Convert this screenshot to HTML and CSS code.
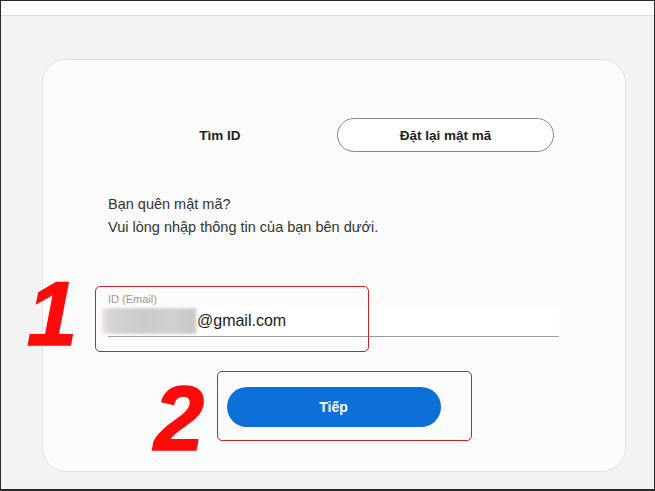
FILE: index.html
```html
<!DOCTYPE html>
<html lang="vi">
<head>
<meta charset="utf-8">
<title>Đặt lại mật mã</title>
<link rel="stylesheet" href="styles.css">
</head>
<body>
<div class="frame">
  <div class="topbar"></div>
  <main class="main">
    <section class="card">
      <div class="tabs">
        <div class="tab">Tìm ID</div>
        <div class="tab tab-active">Đặt lại mật mã</div>
      </div>
      <p class="intro">Bạn quên mật mã?<br>Vui lòng nhập thông tin của bạn bên dưới.</p>
      <div class="field">
        <label class="field-label">ID (Email)</label>
        <div class="field-input">
          <span class="blur"></span><span class="value">@gmail.com</span>
        </div>
      </div>
      <div class="actions">
        <button class="btn-next">Tiếp</button>
      </div>
    </section>
  </main>
  <div class="mark mark-box1"></div>
  <div class="mark mark-box2"></div>
  <div class="num num1">1</div>
  <div class="num num2">2</div>
</div>
</body>
</html>
```

FILE: styles.css
```css
* { box-sizing: border-box; }
html, body { margin: 0; padding: 0; }
body {
  font-family: "Liberation Sans", Arial, sans-serif;
  width: 655px;
  height: 491px;
  overflow: hidden;
}
.frame {
  position: relative;
  width: 655px;
  height: 491px;
  border: 1px solid #2a2a2a;
  border-bottom-width: 2px;
  background: #f3f3f3;
}
.topbar {
  height: 15px;
  background: #ffffff;
  border-bottom: 1px solid #dcdcdc;
}
.main {
  padding: 43px 0 0 41px;
}
.card {
  width: 584px;
  height: 413px;
  background: #fbfbfb;
  border: 1px solid #e2e2e2;
  border-radius: 24px;
  padding: 58px 66px 0 65px;
}
.tabs {
  display: grid;
  grid-template-columns: 224px 217px;
  gap: 5px;
  height: 34px;
}
.tab {
  display: flex;
  align-items: center;
  justify-content: center;
  font-size: 13.5px;
  font-weight: bold;
  color: #222;
}
.tab-active {
  border: 1px solid #8a8a8a;
  border-radius: 17px;
  background: #ffffff;
}
.intro {
  margin: 41px 0 0 0;
  font-size: 14.5px;
  line-height: 23px;
  color: #333;
}
.field {
  margin-top: 53px;
}
.field-label {
  display: block;
  font-size: 11px;
  line-height: 14px;
  color: #9a9a9a;
}
.field-input {
  display: flex;
  align-items: center;
  height: 31px;
  margin-left: -6px;
  background: #ffffff;
  border-bottom: 1px solid #9c9c9c;
  position: relative;
}
.field-input::before {
  content: "";
  position: absolute;
  left: 0;
  bottom: -1px;
  width: 6px;
  height: 1px;
  background: #ffffff;
}
.blur {
  display: block;
  width: 95px;
  height: 26px;
  background: linear-gradient(90deg, #f1dede 0, #e9dcdc 4px, #d4d4d4 8px, #cbcbcb 40px, #d0d0d0 70px, #c8c8c8 92px, #e6e6e6 95px);
  filter: blur(1.5px);
}
.value {
  font-size: 16px;
  color: #1c1c1c;
  line-height: 26px;
}
.actions {
  display: flex;
  justify-content: center;
  margin-top: 50px;
}
.btn-next {
  width: 214px;
  height: 40px;
  border: none;
  border-radius: 20px;
  background: #0d6fd8;
  color: #ffffff;
  font-family: "Liberation Sans", Arial, sans-serif;
  font-size: 14px;
  font-weight: bold;
}
.mark {
  position: absolute;
  border: 1.5px solid #c8232b;
  border-radius: 5px;
}
.mark-box1 {
  left: 94px;
  top: 285px;
  width: 274px;
  height: 66px;
}
.mark-box2 {
  left: 216px;
  top: 370px;
  width: 255px;
  height: 70px;
}
.num {
  position: absolute;
  color: #ff0a0a;
  font-family: "Liberation Sans", Arial, sans-serif;
  font-weight: bold;
  font-style: italic;
  font-size: 90px;
  line-height: 90px;
  -webkit-text-stroke: 1.5px #ff0a0a;
}
.num1 {
  left: 26px;
  top: 268px;
}
.num2 {
  left: 153px;
  top: 373px;
}
```
